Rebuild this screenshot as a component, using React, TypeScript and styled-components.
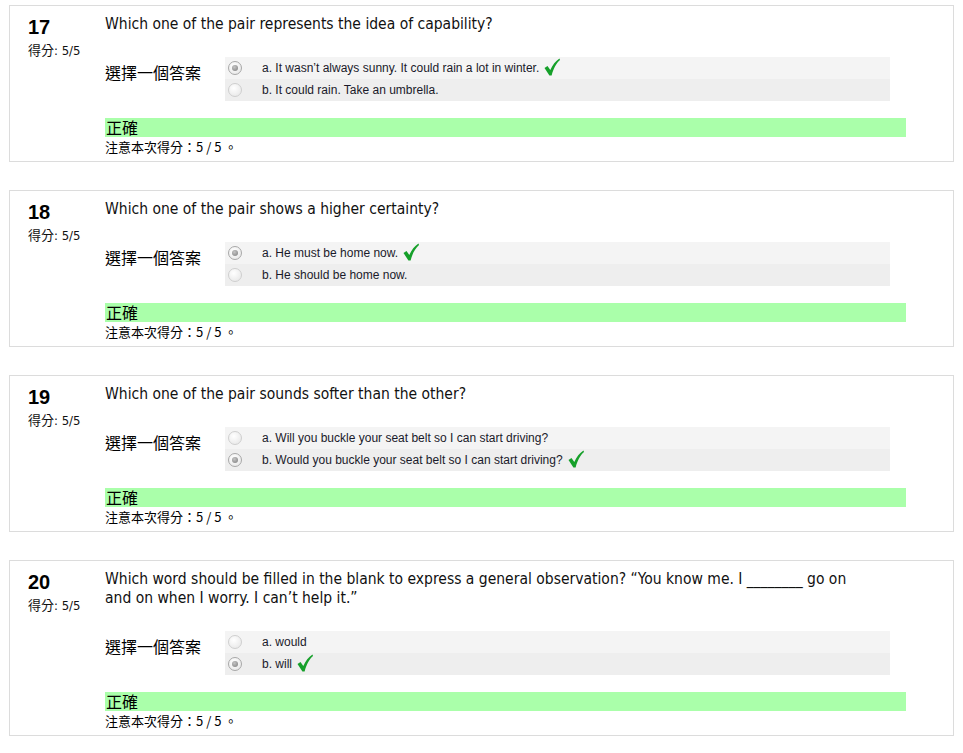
import React from 'react'
import styled, { createGlobalStyle } from 'styled-components'

const GlobalStyle = createGlobalStyle`
  html, body {
    margin: 0;
    padding: 0;
    background: #fff;
  }
  body {
    font-family: "Liberation Sans", Arial, "Noto Sans CJK TC", sans-serif;
    color: #000;
  }
`

const Page = styled.div`
  padding: 5px 0 0 9px;
  width: 945px;
`

const Card = styled.div`
  display: flex;
  border: 1px solid #dcdcdc;
  margin-bottom: 28px;
  padding: 9px 0 6px;
`

const Info = styled.div`
  width: 77px;
  padding-left: 18px;
  flex-shrink: 0;
`

const Num = styled.div`
  font-family: "Liberation Sans", Arial, sans-serif;
  font-weight: bold;
  font-size: 20px;
  line-height: 22px;
  margin-top: 1px;
`

const Grade = styled.div`
  font-family: "DejaVu Sans Condensed", "Noto Sans CJK TC", sans-serif;
  font-size: 13px;
  line-height: 14px;
  margin-top: 6px;
  white-space: nowrap;
  color: #111;
`

const Content = styled.div`
  width: 801px;
`

const Question = styled.div`
  font-family: "DejaVu Sans Condensed", "DejaVu Sans", sans-serif;
  font-size: 15.5px;
  line-height: 19px;
  color: #111;
  padding-right: 30px;
`

const Ablock = styled.div`
  display: flex;
  margin-top: 23px;
`

const Prompt = styled.div`
  width: 120px;
  flex-shrink: 0;
  font-family: "Noto Sans CJK TC", sans-serif;
  font-size: 16px;
  line-height: 20px;
  padding-top: 5px;
`

const Answers = styled.div`
  width: 665px;
`

const Row = styled.div<{ $alt?: boolean }>`
  display: flex;
  align-items: center;
  height: 22px;
  background: ${p => (p.$alt ? '#eeeeee' : '#f4f4f4')};
  padding-left: 3px;
  font-size: 12px;
  color: #1a1a2a;
`

const Radio = styled.span<{ $on?: boolean }>`
  position: relative;
  width: 12px;
  height: 12px;
  border-radius: 50%;
  border: 1px solid ${p => (p.$on ? '#a8a8a8' : '#cfcfcf')};
  background: radial-gradient(circle at 40% 35%, #ffffff, #e4e4e4);
  margin-right: 20px;
  flex-shrink: 0;
  &::after {
    content: '';
    display: ${p => (p.$on ? 'block' : 'none')};
    position: absolute;
    left: 3px;
    top: 3px;
    width: 6px;
    height: 6px;
    border-radius: 50%;
    background: radial-gradient(circle at 40% 35%, #c4c4c4, #7d7d7d);
  }
`

const Tick = styled.svg`
  margin-left: 5px;
  margin-top: -2px;
`

const Feedback = styled.div`
  margin-top: 17px;
  background: #aaffaa;
  font-family: "Noto Sans CJK TC", sans-serif;
  font-size: 16px;
  line-height: 19px;
  height: 19px;
  padding-left: 1px;
`

const Note = styled.div`
  font-family: "Noto Sans CJK TC", sans-serif;
  font-size: 13px;
  line-height: 17px;
  padding-top: 1px;
`

const Check = () => (
  <Tick width="16" height="18" viewBox="0 0 16 18">
    <path d="M0.5 10 L3.5 8 L6.3 12 C8.5 7 11.5 3 15.5 0.5 L16 2 C12.2 5.5 9.6 10 7.6 17.5 L5.4 17.5 Z" fill="#16a02a" />
  </Tick>
)

type Q = {
  n: number
  text: string
  options: string[]
  chosen: number
}

const questions: Q[] = [
  {
    n: 17,
    text: 'Which one of the pair represents the idea of capability?',
    options: ['a. It wasn’t always sunny. It could rain a lot in winter.', 'b. It could rain. Take an umbrella.'],
    chosen: 0,
  },
  {
    n: 18,
    text: 'Which one of the pair shows a higher certainty?',
    options: ['a. He must be home now.', 'b. He should be home now.'],
    chosen: 0,
  },
  {
    n: 19,
    text: 'Which one of the pair sounds softer than the other?',
    options: ['a. Will you buckle your seat belt so I can start driving?', 'b. Would you buckle your seat belt so I can start driving?'],
    chosen: 1,
  },
  {
    n: 20,
    text: 'Which word should be filled in the blank to express a general observation? “You know me. I ________ go on and on when I worry. I can’t help it.”',
    options: ['a. would', 'b. will'],
    chosen: 1,
  },
]

const QuestionCard = ({ q }: { q: Q }) => (
  <Card>
    <Info>
      <Num>{q.n}</Num>
      <Grade>得分: 5/5</Grade>
    </Info>
    <Content>
      <Question>{q.text}</Question>
      <Ablock>
        <Prompt>選擇一個答案</Prompt>
        <Answers>
          {q.options.map((o, i) => (
            <Row key={i} $alt={i === 1}>
              <Radio $on={i === q.chosen} />
              {o}
              {i === q.chosen && <Check />}
            </Row>
          ))}
        </Answers>
      </Ablock>
      <Feedback>正確</Feedback>
      <Note>注意本次得分：5 / 5 。</Note>
    </Content>
  </Card>
)

export default function App() {
  return (
    <Page>
      <GlobalStyle />
      {questions.map(q => (
        <QuestionCard key={q.n} q={q} />
      ))}
    </Page>
  )
}
